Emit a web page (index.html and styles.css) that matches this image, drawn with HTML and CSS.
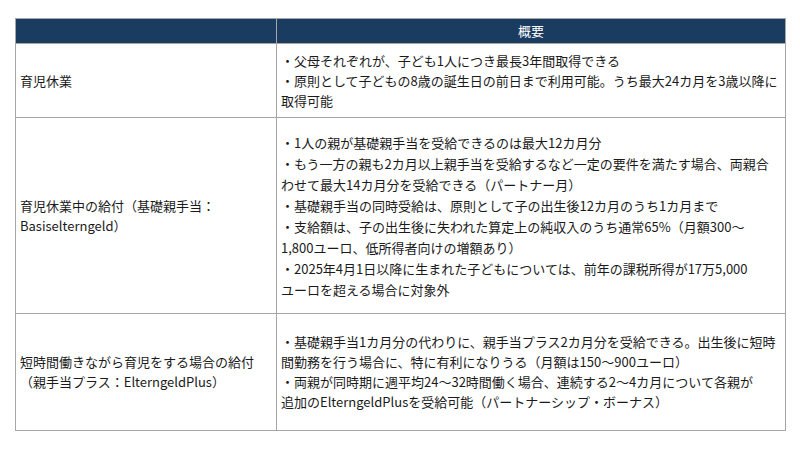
FILE: index.html
```html
<!DOCTYPE html>
<html lang="ja">
<head>
<meta charset="utf-8">
<link rel="stylesheet" href="styles.css">
</head>
<body>
<table class="summary">
  <colgroup><col class="c1"><col class="c2"></colgroup>
  <thead>
    <tr><th></th><th>概要</th></tr>
  </thead>
  <tbody>
    <tr class="r1">
      <td class="label">育児休業</td>
      <td class="desc">・父母それぞれが、子ども1人につき最長3年間取得できる<br>・原則として子どもの8歳の誕生日の前日まで利用可能。うち最大24カ月を3歳以降に<br>取得可能</td>
    </tr>
    <tr class="r2">
      <td class="label">育児休業中の給付（基礎親手当：<br>Basiselterngeld）</td>
      <td class="desc wide">・1人の親が基礎親手当を受給できるのは最大12カ月分<br>・もう一方の親も2カ月以上親手当を受給するなど一定の要件を満たす場合、両親合<br>わせて最大14カ月分を受給できる（パートナー月）<br>・基礎親手当の同時受給は、原則として子の出生後12カ月のうち1カ月まで<br>・支給額は、子の出生後に失われた算定上の純収入のうち通常65%（月額300～<br>1,800ユーロ、低所得者向けの増額あり）<br>・2025年4月1日以降に生まれた子どもについては、前年の課税所得が17万5,000<br>ユーロを超える場合に対象外</td>
    </tr>
    <tr class="r3">
      <td class="label">短時間働きながら育児をする場合の給付<br>（親手当プラス：ElterngeldPlus）</td>
      <td class="desc">・基礎親手当1カ月分の代わりに、親手当プラス2カ月分を受給できる。出生後に短時<br>間勤務を行う場合に、特に有利になりうる（月額は150～900ユーロ）<br>・両親が同時期に週平均24～32時間働く場合、連続する2～4カ月について各親が<br>追加のElterngeldPlusを受給可能（パートナーシップ・ボーナス）</td>
    </tr>
  </tbody>
</table>
</body>
</html>
```

FILE: styles.css
```css
html, body {
  margin: 0;
  padding: 0;
  background: #ffffff;
}
body {
  font-family: "Noto Sans CJK JP", "Noto Sans", sans-serif;
  color: #1a1a1a;
  font-size: 13px;
  line-height: 20px;
}
.summary {
  border-collapse: collapse;
  margin: 18px 0 0 15px;
  width: 770px;
  table-layout: fixed;
}
.c1 { width: 261px; }
.c2 { width: 509px; }
.summary th {
  background: #1a3c61;
  color: #ffffff;
  font-weight: normal;
  height: 24px;
  padding: 0;
  border: 1px solid #a6a6a6;
  text-align: center;
  line-height: 24px;
}
.summary td {
  border: 1px solid #a6a6a6;
  vertical-align: middle;
  padding: 0 0 0 4px;
  white-space: nowrap;
}
.r1 td { height: 73px; }
.r2 td { height: 195px; }
.r3 td { height: 116px; }
.wide { line-height: 21px; }
```
